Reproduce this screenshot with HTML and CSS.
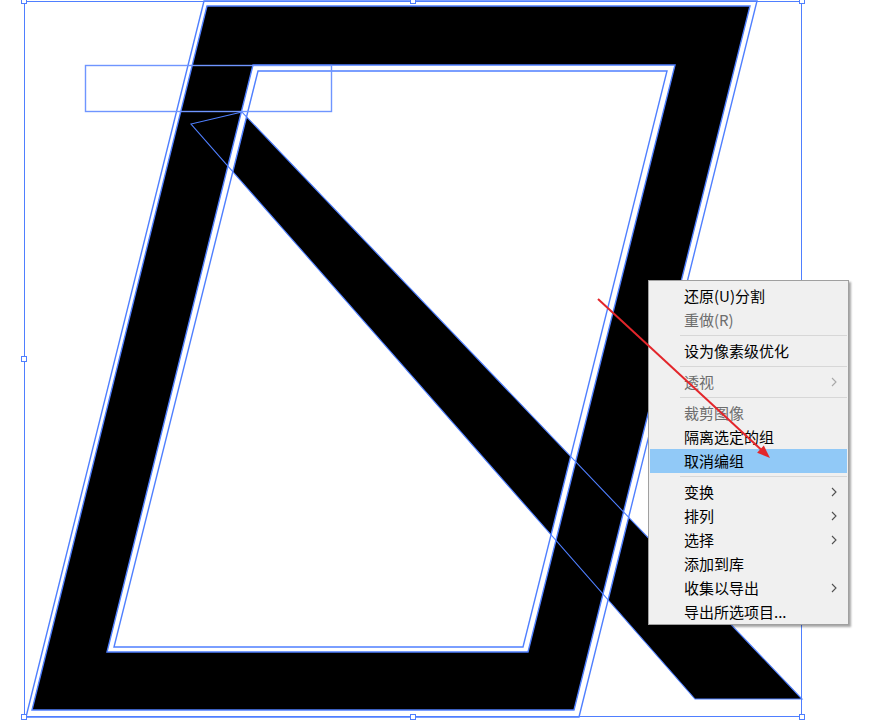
FILE: index.html
```html
<!DOCTYPE html>
<html>
<head>
<meta charset="utf-8">
<title>Canvas</title>
<link rel="stylesheet" href="styles.css">
</head>
<body>
<div class="canvas">
  <svg class="art" width="876" height="728" viewBox="0 0 876 728">
    <polygon class="band" points="242,112 191,124 695,699 802,699"/>
    <path class="strip" fill-rule="evenodd" d="M204,1 L757,1 L579,717 L26,717 Z M258,71 L667,71 L523,647 L114,647 Z"/>
    <path class="frame" fill-rule="evenodd" d="M207,6 L750,6 L574,710 L32,710 Z M253,65 L675,65 L528,652 L107,652 Z"/>
    <polygon class="band-line" points="242,112 191,124 695,699 802,699"/>
    <rect class="box" x="85.5" y="65.5" width="246" height="46"/>
    <rect class="bbox" x="24.5" y="1.5" width="777" height="715"/>
    <rect class="handle" x="21.5" y="-1.5" width="5" height="5"/>
    <rect class="handle" x="410.5" y="-1.5" width="5" height="5"/>
    <rect class="handle" x="799.5" y="-1.5" width="5" height="5"/>
    <rect class="handle" x="21.5" y="356.5" width="5" height="5"/>
    <rect class="handle" x="799.5" y="356.5" width="5" height="5"/>
    <rect class="handle" x="21.5" y="714.5" width="5" height="5"/>
    <rect class="handle" x="410.5" y="714.5" width="5" height="5"/>
    <rect class="handle" x="799.5" y="714.5" width="5" height="5"/>
  </svg>

  <div class="menu">
    <div class="item">还原(U)分割</div>
    <div class="item disabled">重做(R)</div>
    <div class="sep"></div>
    <div class="item">设为像素级优化</div>
    <div class="sep"></div>
    <div class="item disabled sub">透视<svg class="chev" width="6" height="10" viewBox="0 0 6 10"><polyline points="1,1 5,5 1,9"/></svg></div>
    <div class="sep"></div>
    <div class="item disabled">裁剪图像</div>
    <div class="item">隔离选定的组</div>
    <div class="item active">取消编组</div>
    <div class="sep"></div>
    <div class="item sub">变换<svg class="chev" width="6" height="10" viewBox="0 0 6 10"><polyline points="1,1 5,5 1,9"/></svg></div>
    <div class="item sub">排列<svg class="chev" width="6" height="10" viewBox="0 0 6 10"><polyline points="1,1 5,5 1,9"/></svg></div>
    <div class="item sub">选择<svg class="chev" width="6" height="10" viewBox="0 0 6 10"><polyline points="1,1 5,5 1,9"/></svg></div>
    <div class="item">添加到库</div>
    <div class="item sub">收集以导出<svg class="chev" width="6" height="10" viewBox="0 0 6 10"><polyline points="1,1 5,5 1,9"/></svg></div>
    <div class="item">导出所选项目...</div>
  </div>

  <svg class="overlay" width="876" height="728" viewBox="0 0 876 728">
    <line class="arrow-line" x1="598" y1="299" x2="761" y2="449.5"/>
    <polygon class="arrow-head" points="770,458 757.1,452.8 763.8,445.5"/>
  </svg>
</div>
</body>
</html>
```

FILE: styles.css
```css
html, body {
  margin: 0;
  padding: 0;
  background: #ffffff;
}

.canvas {
  position: relative;
  width: 876px;
  height: 728px;
  overflow: hidden;
  background: #ffffff;
}

.art {
  display: block;
}

.band {
  fill: #000000;
  stroke: none;
}

.strip {
  fill: #ffffff;
  stroke: #4f7fff;
  stroke-width: 1.4;
}

.frame {
  fill: #000000;
  stroke: #4f7fff;
  stroke-width: 1.4;
}

.band-line {
  fill: none;
  stroke: #4f7fff;
  stroke-width: 1.1;
}

.box {
  fill: none;
  stroke: #6f95ff;
  stroke-width: 1.4;
}

.bbox {
  fill: none;
  stroke: #4f7fff;
  stroke-width: 1;
}

.handle {
  fill: #ffffff;
  stroke: #4f7fff;
  stroke-width: 1;
}

.overlay {
  position: absolute;
  left: 0;
  top: 0;
  pointer-events: none;
}

.arrow-line {
  stroke: #e3262b;
  stroke-width: 2;
}

.arrow-head {
  fill: #e3262b;
}

.menu {
  position: absolute;
  left: 648px;
  top: 280px;
  width: 201px;
  height: 345px;
  box-sizing: border-box;
  padding: 3px 1px 0 1px;
  background: #f0f0f0;
  border: 1px solid #a0a0a0;
  box-shadow: 2px 2px 2px rgba(0, 0, 0, 0.35);
  font-family: "Noto Sans CJK SC", "Noto Sans", sans-serif;
  font-size: 15px;
  color: #000000;
}

.item {
  height: 24px;
  line-height: 24px;
  padding: 0 10px 0 34px;
  display: flex;
  align-items: center;
  justify-content: space-between;
  white-space: nowrap;
}

.item.disabled {
  color: #6d6d6d;
}

.item.active {
  background: #91c9f7;
}

.sep {
  height: 7px;
  display: flex;
  flex-direction: column;
  justify-content: center;
  padding-left: 30px;
}

.sep::before {
  content: "";
  display: block;
  height: 1px;
  background: #d7d7d7;
}

.chev polyline {
  fill: none;
  stroke: #505050;
  stroke-width: 1.1;
}

.disabled .chev polyline {
  stroke: #a8a8a8;
}
```
